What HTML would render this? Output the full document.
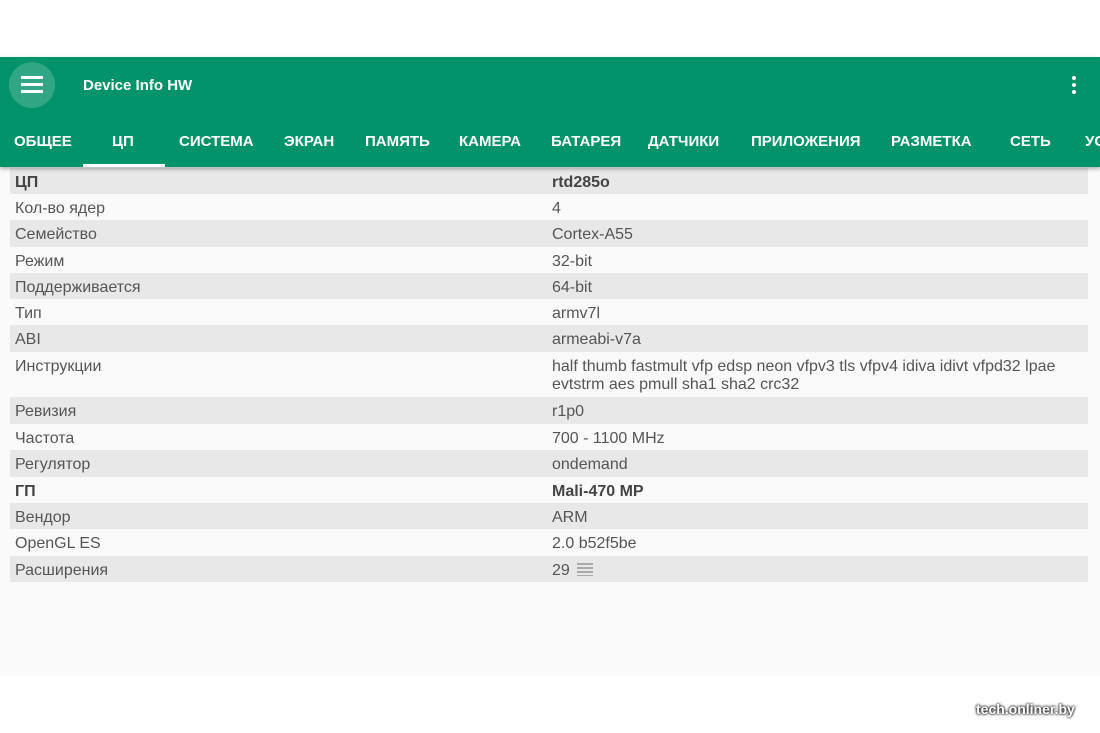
<!DOCTYPE html>
<html><head><meta charset="utf-8"><style>
*{margin:0;padding:0;box-sizing:border-box}
body{width:1100px;height:733px;background:#fff;font-family:"Liberation Sans",sans-serif;position:relative;overflow:hidden}
.bar{position:absolute;left:0;top:57px;width:1100px;height:110px;background:#03936b;box-shadow:0 2px 4px rgba(0,0,0,.3);z-index:2}
.menu{position:absolute;left:9px;top:62px;width:46px;height:46px;border-radius:50%;background:rgba(255,255,255,.18)}
.menu i{position:absolute;left:12px;width:22px;height:2.5px;background:#fff}
.title{position:absolute;left:83px;top:77px;color:#fff;font-size:15px;font-weight:bold}
.dots{position:absolute;left:1072px;top:76px}
.dots i{display:block;width:4px;height:4px;border-radius:50%;background:#fff;margin-bottom:3px}
.tab{position:absolute;top:133px;color:#fff;font-size:15px;font-weight:bold;white-space:nowrap}
.ind{position:absolute;left:83px;top:164px;width:82px;height:3px;background:#fff}
.screen{position:absolute;left:0;top:167px;width:1100px;height:509px;background:#fafafa}
.row{position:absolute;left:10px;width:1078px;font-size:16px;color:#555}
.row.g{background:#e8e8e8}
.row span{position:absolute;left:5px;top:6px !important}
.row b,.row em{position:absolute;left:542px;top:6px !important;font-style:normal;font-weight:normal;line-height:18px}
.row.h span,.row.h b{font-weight:bold;color:#444}
.wm{position:absolute;left:976px;top:701px;color:#fff;font-size:14px;font-weight:bold;text-shadow:0 0 3px #000,0 0 2px #000}
</style></head><body>
<div class="bar">
</div>
<div class="menu" style="z-index:3"><i style="top:14px"></i><i style="top:21px"></i><i style="top:28px"></i></div>
<div class="title" style="z-index:3">Device Info HW</div>
<div class="dots" style="z-index:3"><i></i><i></i><i></i></div>
<div style="z-index:3;position:absolute;left:0;top:0;width:1100px;height:170px">
<div class="tab" style="left:14px">ОБЩЕЕ</div>
<div class="tab" style="left:112px">ЦП</div>
<div class="tab" style="left:179px">СИСТЕМА</div>
<div class="tab" style="left:284px">ЭКРАН</div>
<div class="tab" style="left:365px">ПАМЯТЬ</div>
<div class="tab" style="left:459px">КАМЕРА</div>
<div class="tab" style="left:551px">БАТАРЕЯ</div>
<div class="tab" style="left:648px">ДАТЧИКИ</div>
<div class="tab" style="left:751px">ПРИЛОЖЕНИЯ</div>
<div class="tab" style="left:891px">РАЗМЕТКА</div>
<div class="tab" style="left:1010px">СЕТЬ</div>
<div class="tab" style="left:1085px">УС</div>
<div class="ind"></div>
</div>
<div class="screen"></div>
<div class="row g h" style="top:168px;height:26px"><span>ЦП</span><b>rtd285o</b></div>
<div class="row" style="top:194px;height:26px"><span>Кол-во ядер</span><b>4</b></div>
<div class="row g" style="top:220px;height:27px"><span>Семейство</span><b>Cortex-A55</b></div>
<div class="row" style="top:247px;height:26px"><span>Режим</span><b>32-bit</b></div>
<div class="row g" style="top:273px;height:26px"><span>Поддерживается</span><b>64-bit</b></div>
<div class="row" style="top:299px;height:26px"><span>Тип</span><b>armv7l</b></div>
<div class="row g" style="top:325px;height:27px"><span>ABI</span><b>armeabi-v7a</b></div>
<div class="row" style="top:352px;height:45px"><span>Инструкции</span><em style="width:525px">half thumb fastmult vfp edsp neon vfpv3 tls vfpv4 idiva idivt vfpd32 lpae evtstrm aes pmull sha1 sha2 crc32</em></div>
<div class="row g" style="top:397px;height:27px"><span>Ревизия</span><b>r1p0</b></div>
<div class="row" style="top:424px;height:26px"><span>Частота</span><b>700 - 1100 MHz</b></div>
<div class="row g" style="top:450px;height:27px"><span>Регулятор</span><b>ondemand</b></div>
<div class="row h" style="top:477px;height:26px"><span>ГП</span><b>Mali-470 MP</b></div>
<div class="row g" style="top:503px;height:26px"><span>Вендор</span><b>ARM</b></div>
<div class="row" style="top:529px;height:27px"><span>OpenGL ES</span><b>2.0 b52f5be</b></div>
<div class="row g" style="top:556px;height:26px"><span>Расширения</span><b>29 <svg width="16" height="14" style="vertical-align:-1px;margin-left:3px"><g fill="#aaa"><rect x="0" y="1" width="16" height="2"/><rect x="0" y="5" width="16" height="2"/><rect x="0" y="9" width="16" height="2"/><rect x="0" y="13" width="16" height="1.5"/></g></svg></b></div>
<div class="wm">tech.onliner.by</div>
</body></html>
